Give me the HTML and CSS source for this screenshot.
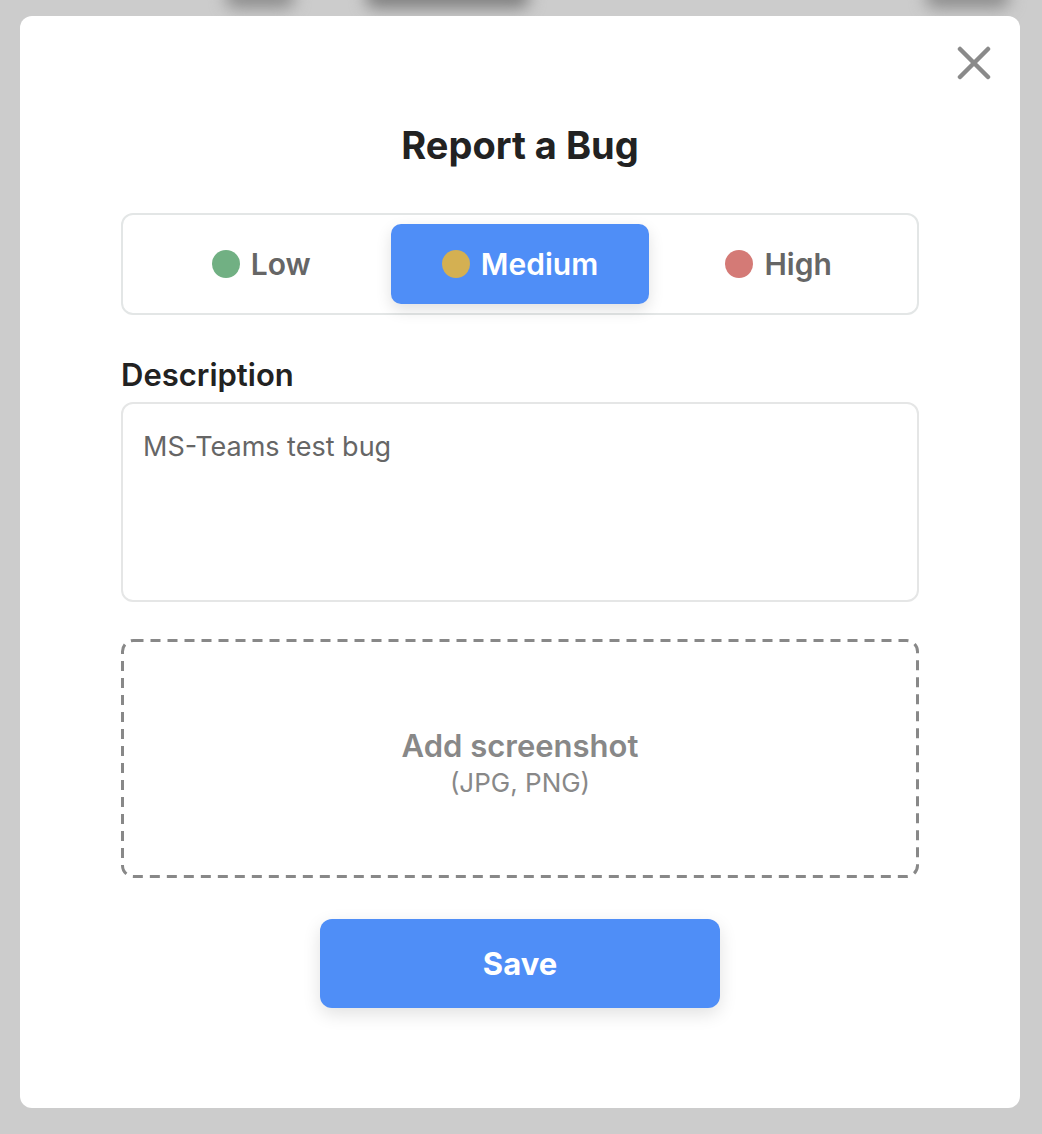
FILE: index.html
```html
<!DOCTYPE html>
<html lang="en">
<head>
  <meta charset="UTF-8" />
  <meta name="viewport" content="width=device-width, initial-scale=1.0" />
  <title>Report a Bug</title>
  <link rel="stylesheet" href="styles.css">
</head>
<body>

  <!-- blurred page behind the dialog -->
  <div class="backdrop">
    <span class="blob blob-a"></span>
    <span class="blob blob-b"></span>
    <span class="blob blob-c"></span>
  </div>

  <div class="modal">
    <button class="closeBtn" aria-label="Close">
      <svg width="34" height="34" viewBox="0 0 34 34">
        <path d="M3 3 L31 31 M31 3 L3 31" stroke="#8a8a8a" stroke-width="4.5" stroke-linecap="round" fill="none"/>
      </svg>
    </button>

    <h1 class="title">Report a Bug</h1>

    <div class="priority">
      <div class="option"><span class="dot dot-low"></span>Low</div>
      <div class="option active"><span class="dot dot-med"></span>Medium</div>
      <div class="option"><span class="dot dot-high"></span>High</div>
    </div>

    <label class="label">Description</label>
    <div class="textbox">MS-Teams test bug</div>

    <div class="dropzone">
      <!-- dashed outline, drawn so the dash length matches -->
      <svg class="dashes" width="100%" height="100%">
        <rect x="1.5" y="1.5" rx="11" ry="11" fill="none" stroke="#888" stroke-width="3" stroke-dasharray="10 7"
              style="width: calc(100% - 3px); height: calc(100% - 3px);"/>
      </svg>
      <div class="dropTitle">Add screenshot</div>
      <div class="dropHint">(JPG, PNG)</div>
    </div>

    <button class="saveBtn">Save</button>
  </div>

</body>
</html>
```

FILE: styles.css
```css
body {
  margin: 0;
  background: #cccccc;
  font-family: Inter, "Noto Sans", Arial, sans-serif;
  overflow: hidden;
}

.backdrop {
  position: fixed;
  top: 0;
  left: 0;
  width: 100%;
  height: 40px;
  z-index: 0;
}

.blob {
  position: absolute;
  top: -14px;
  height: 22px;
  background: #8c8c8c;
  border-radius: 12px;
  filter: blur(8px);
}

.blob-a { left: 225px; width: 70px; }
.blob-b { left: 365px; width: 165px; background: #7d7d7d; }
.blob-c { left: 925px; width: 85px; }

.modal {
  position: relative;
  z-index: 1;
  margin: 16px 0 0 20px;
  width: 1000px;
  height: 1092px;
  background: #fff;
  border-radius: 12px;
  padding: 0 101px;
  box-sizing: border-box;
  display: flex;
  flex-direction: column;
  align-items: stretch;
}

.closeBtn {
  position: absolute;
  top: 30px;
  right: 29px;
  background: none;
  border: none;
  padding: 0;
  cursor: pointer;
}

.closeBtn svg { display: block; }

.title {
  margin: 105px 0 0;
  text-align: center;
  font-size: 38px;
  line-height: 48px;
  font-weight: 700;
  color: #222;
}

.priority {
  margin-top: 44px;
  border: 2px solid #e3e6e6;
  border-radius: 12px;
  padding: 9px;
  display: grid;
  grid-template-columns: 1fr 1fr 1fr;
}

.option {
  height: 80px;
  border-radius: 10px;
  display: flex;
  align-items: center;
  justify-content: center;
  gap: 11px;
  font-size: 30px;
  font-weight: 600;
  color: #666;
}

.option.active {
  background: #4f8ef7;
  color: #fff;
  box-shadow: 0 6px 16px rgba(0, 0, 0, 0.12);
}

.dot {
  width: 28px;
  height: 28px;
  border-radius: 50%;
}

.dot-low { background: #71b083; }
.dot-med { background: #d4b052; }
.dot-high { background: #d47a76; }

.label {
  margin-top: 42px;
  font-size: 31px;
  line-height: 36px;
  font-weight: 600;
  color: #222;
}

.textbox {
  margin-top: 9px;
  height: 200px;
  box-sizing: border-box;
  border: 2px solid #e5e6e6;
  border-radius: 12px;
  padding: 26px 20px;
  font-size: 27px;
  line-height: 34px;
  color: #666;
}

.dropzone {
  position: relative;
  margin-top: 37px;
  height: 239px;
  box-sizing: border-box;
  display: flex;
  flex-direction: column;
  align-items: center;
  justify-content: center;
  padding-top: 10px;
}

.dashes {
  position: absolute;
  top: 0;
  left: 0;
}

.dropTitle {
  font-size: 31px;
  line-height: 38px;
  font-weight: 600;
  color: #888;
}

.dropHint {
  font-size: 26px;
  line-height: 36px;
  color: #888;
}

.saveBtn {
  margin: 41px auto 0;
  width: 400px;
  height: 89px;
  border: none;
  border-radius: 12px;
  background: #4f8ef7;
  color: #fff;
  font-family: inherit;
  font-size: 31px;
  font-weight: 700;
  box-shadow: 0 6px 18px rgba(0, 0, 0, 0.12);
  cursor: pointer;
}
```
